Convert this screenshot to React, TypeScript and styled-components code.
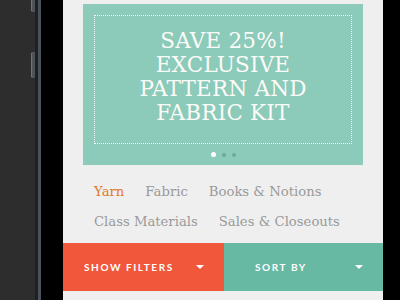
import React from "react";
import styled, { createGlobalStyle } from "styled-components";

// STYLED COMPONENTS --------------------------->

const GlobalStyle = createGlobalStyle`
  html, body {
    margin: 0;
    padding: 0;
    background: #000;
    overflow: hidden;
  }
`;

const Device = styled.div`
  display: flex;
  width: 400px;
  height: 300px;
  background: #000;
`;

const Body = styled.div`
  position: relative;
  width: 35px;
  background: #2d2d2d;
`;

const SideKey = styled.div<{ $top: number; $height: number }>`
  position: absolute;
  right: 0;
  top: ${(p) => p.$top}px;
  width: 3px;
  height: ${(p) => p.$height}px;
  border-radius: 2px 0 0 2px;
  background: #4f5257;
  border-left: 1px solid #6f7277;
`;

const Rim = styled.div<{ $w: number; $color: string }>`
  width: ${(p) => p.$w}px;
  background: ${(p) => p.$color};
`;

const Bezel = styled.div<{ $w: number }>`
  width: ${(p) => p.$w}px;
  background: #000;
`;

const Screen = styled.div`
  width: 320px;
  background: #efefef;
  display: flex;
  flex-direction: column;
  padding-top: 4px;
`;

const Banner = styled.div`
  margin: 0 20px;
  height: 161px;
  background: #8ccab9;
  padding: 11px;
  box-sizing: border-box;
`;

const DottedFrame = styled.div`
  height: 127px;
  border: 1px dotted rgba(255, 255, 255, 0.9);
  display: flex;
  align-items: center;
  justify-content: center;
`;

const Headline = styled.h1`
  margin: 0 0 6px;
  font-family: "DejaVu Serif", serif;
  font-weight: normal;
  font-size: 21.5px;
  line-height: 24px;
  text-align: center;
  color: #fbfbf7;
  letter-spacing: 0.2px;
`;

const Dots = styled.div`
  display: flex;
  justify-content: center;
  align-items: center;
  gap: 6px;
  margin-top: 8px;
`;

const Dot = styled.span<{ $active?: boolean }>`
  width: ${(p) => (p.$active ? 5 : 4)}px;
  height: ${(p) => (p.$active ? 5 : 4)}px;
  border-radius: 50%;
  background: ${(p) => (p.$active ? "#ffffff" : "#6fa899")};
`;

const Nav = styled.nav`
  display: flex;
  flex-wrap: wrap;
  align-content: flex-start;
  column-gap: 21px;
  padding: 12px 20px 0 31px;
  height: 78px;
  box-sizing: border-box;
`;

const NavItem = styled.a<{ $active?: boolean }>`
  font-family: "DejaVu Serif", serif;
  font-size: 13.2px;
  line-height: 30px;
  color: ${(p) => (p.$active ? "#e0792b" : "#9a9a9a")};
  text-decoration: none;
`;

const ActionBar = styled.div`
  display: flex;
  height: 48px;
`;

const ActionButton = styled.button<{ $bg: string; $w: number; $pl: number }>`
  width: ${(p) => p.$w}px;
  background: ${(p) => p.$bg};
  border: none;
  display: flex;
  align-items: center;
  justify-content: space-between;
  padding: 0 20px 0 ${(p) => p.$pl}px;
  color: #fff;
  font-family: Lato, "Open Sans", sans-serif;
  font-weight: 700;
  font-size: 10px;
  letter-spacing: 1.6px;
`;

const Caret = styled.span`
  width: 0;
  height: 0;
  border-left: 4px solid transparent;
  border-right: 4px solid transparent;
  border-top: 4px solid #fff;
`;

// FUNCTIONAL COMPONENT --------------------------->

const categories = [
  "Yarn",
  "Fabric",
  "Books & Notions",
  "Class Materials",
  "Sales & Closeouts",
];

const App = () => {
  return (
    <>
      <GlobalStyle />
      <Device>
        <Body>
          <SideKey $top={-4} $height={16} />
          <SideKey $top={52} $height={26} />
        </Body>
        <Rim $w={3} $color="#1d2126" />
        <Rim $w={3} $color="#4b5159" />
        <Bezel $w={22} />
        <Screen>
          <Banner>
            <DottedFrame>
              <Headline>
                SAVE 25%!
                <br />
                EXCLUSIVE
                <br />
                PATTERN AND
                <br />
                FABRIC KIT
              </Headline>
            </DottedFrame>
            <Dots>
              <Dot $active />
              <Dot />
              <Dot />
            </Dots>
          </Banner>
          <Nav>
            {categories.map((c, i) => (
              <NavItem key={c} href="#" $active={i === 0}>
                {c}
              </NavItem>
            ))}
          </Nav>
          <ActionBar>
            <ActionButton $bg="#f1573a" $w={161} $pl={21}>
              SHOW FILTERS
              <Caret />
            </ActionButton>
            <ActionButton $bg="#67b9a4" $w={159} $pl={31}>
              SORT BY
              <Caret />
            </ActionButton>
          </ActionBar>
        </Screen>
        <Bezel $w={16} />
      </Device>
    </>
  );
};

export default App;
